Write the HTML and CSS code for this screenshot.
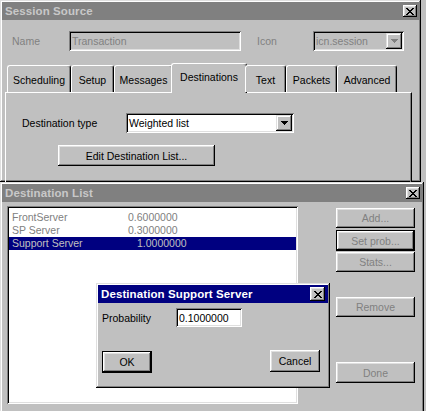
FILE: index.html
```html
<!DOCTYPE html>
<html>
<head>
<meta charset="utf-8">
<link rel="stylesheet" href="styles.css">
</head>
<body>
<div class="desk">
  <div class="win session">
    <div class="titlebar inactive">
      <span class="title">Session Source</span>
      <span class="xbtn"><svg width="8" height="7" viewBox="0 0 8 7" shape-rendering="crispEdges"><path d="M0 0h2v1H0zM6 0h2v1H6zM1 1h2v1H1zM5 1h2v1H5zM2 2h4v1H2zM3 3h2v1H3zM2 4h4v1H2zM1 5h2v1H1zM5 5h2v1H5zM0 6h2v1H0zM6 6h2v1H6z" fill="#000"/></svg></span>
    </div>
    <div class="top-row">
      <span class="lbl dim name-lbl">Name</span>
      <div class="field gray name-field"><span class="dim">Transaction</span></div>
      <span class="lbl dim icon-lbl">Icon</span>
      <div class="field gray combo icon-combo">
        <span class="dim">icn.session</span>
        <span class="dd"><svg width="7" height="4" viewBox="0 0 7 4" shape-rendering="crispEdges"><path d="M0 0h7v1H0zM1 1h5v1H1zM2 2h3v1H2zM3 3h1v1H3z" fill="#808080"/></svg></span>
      </div>
    </div>
    <div class="tabs">
      <div class="tab t-sched">Scheduling</div>
      <div class="tab t-setup">Setup</div>
      <div class="tab t-msg">Messages</div>
      <div class="tab t-dest sel">Destinations</div>
      <div class="tab t-text">Text</div>
      <div class="tab t-pack">Packets</div>
      <div class="tab t-adv">Advanced</div>
    </div>
    <div class="panel">
      <div class="dtype-row">
        <span class="lbl dtype-lbl">Destination type</span>
        <div class="field combo dtype">
          <span>Weighted list</span>
          <span class="dd"><svg width="7" height="4" viewBox="0 0 7 4" shape-rendering="crispEdges"><path d="M0 0h7v1H0zM1 1h5v1H1zM2 2h3v1H2zM3 3h1v1H3z" fill="#000"/></svg></span>
        </div>
      </div>
      <div class="btn edit-btn">Edit Destination List...</div>
    </div>
  </div>

  <div class="win dlist">
    <div class="titlebar inactive">
      <span class="title">Destination List</span>
      <span class="xbtn"><svg width="8" height="7" viewBox="0 0 8 7" shape-rendering="crispEdges"><path d="M0 0h2v1H0zM6 0h2v1H6zM1 1h2v1H1zM5 1h2v1H5zM2 2h4v1H2zM3 3h2v1H3zM2 4h4v1H2zM1 5h2v1H1zM5 5h2v1H5zM0 6h2v1H0zM6 6h2v1H6z" fill="#000"/></svg></span>
    </div>
    <div class="dl-main">
      <div class="listbox">
        <div class="item"><span class="nm">FrontServer</span><span class="val">0.6000000</span></div>
        <div class="item"><span class="nm">SP Server</span><span class="val">0.3000000</span></div>
        <div class="item selected"><span class="nm">Support Server</span><span class="val">1.0000000</span></div>
      </div>
      <div class="side">
        <div class="btn dis b-add">Add...</div>
        <div class="btn dis default b-set">Set prob...</div>
        <div class="btn dis b-stats">Stats...</div>
        <div class="btn dis b-remove">Remove</div>
        <div class="btn dis b-done">Done</div>
      </div>
    </div>

    <div class="win modal">
      <div class="titlebar active">
        <span class="title">Destination Support Server</span>
        <span class="xbtn m-x"><svg width="8" height="7" viewBox="0 0 8 7" shape-rendering="crispEdges"><path d="M0 0h2v1H0zM6 0h2v1H6zM1 1h2v1H1zM5 1h2v1H5zM2 2h4v1H2zM3 3h2v1H3zM2 4h4v1H2zM1 5h2v1H1zM5 5h2v1H5zM0 6h2v1H0zM6 6h2v1H6z" fill="#000"/></svg></span>
      </div>
      <div class="prob-row">
        <span class="lbl prob-lbl">Probability</span>
        <div class="field prob-field">0.1000000</div>
      </div>
      <div class="modal-btns">
        <div class="btn default ok-btn">OK</div>
        <div class="btn cancel-btn">Cancel</div>
      </div>
    </div>
  </div>
</div>
</body>
</html>
```

FILE: styles.css
```css
html, body {
  margin: 0;
  padding: 0;
  overflow: hidden;
  background: #c0c0c0;
}
body {
  font-family: "Liberation Sans", Arial, sans-serif;
  font-size: 10.5px;
  color: #000;
}
.desk {
  width: 426px;
  height: 411px;
  overflow: hidden;
}
.win {
  box-sizing: border-box;
  background: #c0c0c0;
  padding: 2px;
  box-shadow: inset -1px -1px #000, inset 1px 1px #dfdfdf, inset -2px -2px #808080, inset 2px 2px #fff;
}
.titlebar {
  height: 18px;
  display: flex;
  align-items: center;
  justify-content: space-between;
  padding: 0 2px 0 3px;
}
.titlebar.inactive { background: #808080; color: #c8c8c8; }
.titlebar.active { background: #000080; color: #fff; }
.title {
  font-weight: bold;
  font-size: 11.5px;
  letter-spacing: 0.1px;
}
.xbtn {
  width: 14px;
  height: 12px;
  background: #c0c0c0;
  display: flex;
  align-items: center;
  justify-content: center;
  box-shadow: inset -1px -1px #000, inset 1px 1px #fff, inset -2px -2px #808080, inset 2px 2px #dfdfdf;
}
.dim { color: #808080; }

/* session source */
.session {
  width: 421px;
  height: 182px;
  overflow: hidden;
}
.top-row {
  margin-top: 11px;
  height: 20px;
  display: flex;
  align-items: center;
}
.name-lbl { margin-left: 10px; width: 57px; }
.icon-lbl { margin-left: 16px; width: 56px; }
.field {
  box-sizing: border-box;
  height: 20px;
  background: #fff;
  display: flex;
  align-items: center;
  padding: 0 3px;
  box-shadow: inset 1px 1px #808080, inset -1px -1px #fff, inset 2px 2px #000, inset -2px -2px #dfdfdf;
}
.field.gray { background: #c0c0c0; }
.name-field { width: 172px; }
.combo { justify-content: space-between; padding-right: 2px; }
.icon-combo { width: 91px; }
.dd {
  width: 16px;
  height: 16px;
  background: #c0c0c0;
  display: flex;
  align-items: center;
  justify-content: center;
  box-shadow: inset -1px -1px #000, inset 1px 1px #dfdfdf, inset -2px -2px #808080, inset 2px 2px #fff;
}

.tabs {
  margin-top: 12px;
  height: 29px;
  padding-left: 5px;
  display: grid;
  grid-template-columns: 64px 43px 59px 72px 41px 51px 60px;
  align-items: end;
  position: relative;
  z-index: 1;
}
.tab {
  box-sizing: border-box;
  height: 27px;
  display: flex;
  align-items: center;
  justify-content: center;
  border-top: 1px solid #fff;
  border-left: 1px solid #fff;
  border-right: 1px solid #000;
  border-radius: 3px 3px 0 0;
  box-shadow: inset -1px 0 #808080;
  background: #c0c0c0;
  padding-top: 2px;
}
.tab.sel {
  height: 30px;
  margin: 0 -2px -1px -2px;
  padding-top: 0;
  padding-bottom: 3px;
}
.panel {
  margin-left: 3px;
  width: 407px;
  height: 120px;
  box-sizing: border-box;
  border-top: 1px solid #fff;
  border-left: 1px solid #fff;
  border-right: 1px solid #000;
  box-shadow: inset -1px 0 #808080;
  padding: 20px 0 0 16px;
}
.dtype-row {
  display: flex;
  align-items: center;
  height: 20px;
}
.dtype-lbl { width: 104px; }
.dtype { width: 168px; }
.btn {
  box-sizing: border-box;
  background: #c0c0c0;
  display: flex;
  align-items: center;
  justify-content: center;
  box-shadow: inset -1px -1px #000, inset 1px 1px #fff, inset -2px -2px #808080, inset 2px 2px #dfdfdf;
}
.btn.default {
  box-shadow: inset 0 0 0 1px #000, inset -2px -2px #000, inset 2px 2px #fff, inset -3px -3px #808080, inset 3px 3px #dfdfdf;
}
.btn.dis { color: #808080; }
.edit-btn {
  margin-top: 12px;
  margin-left: 36px;
  width: 157px;
  height: 21px;
}

/* destination list */
.dlist {
  position: relative;
  width: 424px;
  height: 240px;
}
.dl-main {
  display: flex;
  margin-top: 4px;
  padding-left: 5px;
}
.listbox {
  box-sizing: border-box;
  width: 291px;
  height: 198px;
  background: #fff;
  padding: 5px 2px 2px 2px;
  box-shadow: inset 1px 1px #808080, inset -1px -1px #fff, inset 2px 2px #000, inset -2px -2px #dfdfdf;
}
.item {
  display: flex;
  height: 13px;
  line-height: 13px;
  padding-left: 3px;
  color: #808080;
}
.item .nm { width: 116px; }
.item.selected {
  background: #000080;
  color: #c0c0c0;
}
.item.selected .val { padding-left: 9px; }
.side {
  margin-left: 38px;
  padding-top: 2px;
  width: 79px;
  display: flex;
  flex-direction: column;
}
.side .btn { height: 20px; }
.b-set { margin-top: 2px; height: 21px !important; }
.b-stats { margin-top: 1px; }
.b-remove { margin-top: 25px; }
.b-done { margin-top: 45px; height: 21px !important; }

/* modal */
.modal {
  position: absolute;
  left: 96px;
  top: 101px;
  width: 234px;
  height: 105px;
  z-index: 5;
}
.m-x { width: 15px; height: 14px; margin-right: 1px; }
.prob-row {
  margin-top: 5px;
  display: flex;
  align-items: center;
  padding-left: 4px;
}
.prob-lbl { width: 74px; }
.prob-field { width: 66px; height: 19px; }
.modal-btns {
  margin-top: 23px;
  display: flex;
  justify-content: space-between;
  align-items: flex-start;
  padding: 0 8px 0 4px;
}
.ok-btn { width: 50px; height: 22px; margin-top: 1px; }
.cancel-btn { width: 50px; height: 22px; }
```
